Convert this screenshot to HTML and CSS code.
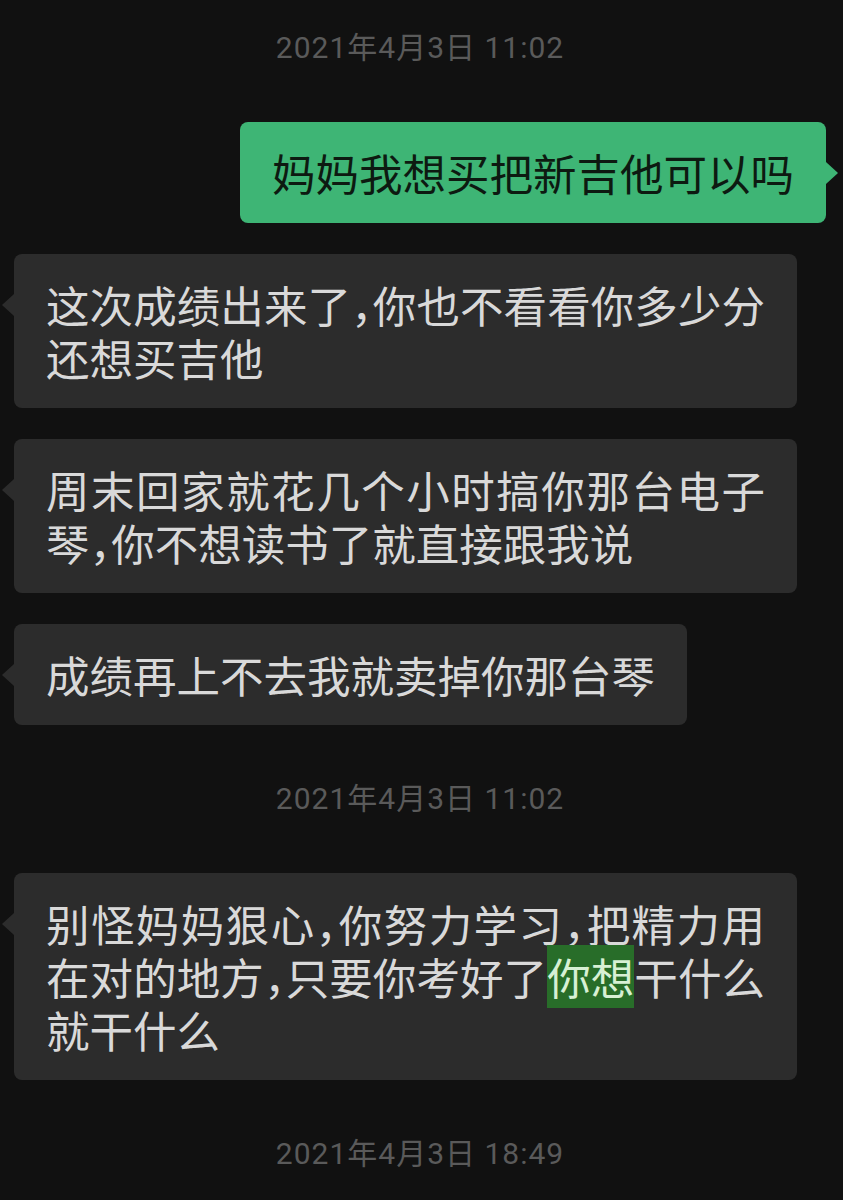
FILE: index.html
```html
<!DOCTYPE html>
<html lang="zh-CN">
<head>
    <meta charset="UTF-8">
    <meta name="viewport" content="width=device-width, initial-scale=1.0">
    <title>聊天记录</title>
    <link rel="stylesheet" href="styles.css">
</head>
<body>
    <div class="chat">
        <div class="time">2021年4月3日 11:02</div>
        <div class="msg msg-out">
            <div class="bubble">妈妈我想买把新吉他可以吗</div>
        </div>
        <div class="msg msg-in">
            <div class="bubble">这次成绩出来了，你也不看看你多少分还想买吉他</div>
        </div>
        <div class="msg msg-in">
            <div class="bubble">周末回家就花几个小时搞你那台电子琴，你不想读书了就直接跟我说</div>
        </div>
        <div class="msg msg-in">
            <div class="bubble">成绩再上不去我就卖掉你那台琴</div>
        </div>
        <div class="time">2021年4月3日 11:02</div>
        <div class="msg msg-in">
            <div class="bubble">别怪妈妈狠心，你努力学习，把精力用在对的地方，只要你考好了<span class="mark">你想</span>干什么就干什么</div>
        </div>
        <div class="time">2021年4月3日 18:49</div>
    </div>
</body>
</html>
```

FILE: styles.css
```css
body {
    margin: 0;
    background-color: #111111;
    font-family: "Noto Sans CJK SC", sans-serif;
}
.chat {
    display: flex;
    flex-direction: column;
    gap: 31px;
    padding: 5px 17px 40px 14px;
}
.time {
    margin: 23px 0;
    text-align: center;
    font-family: Roboto, "Noto Sans CJK SC", sans-serif;
    font-size: 30px;
    line-height: 40px;
    letter-spacing: 1px;
    color: #5a5a5a;
}
.msg {
    display: flex;
}
.msg-out {
    justify-content: flex-end;
}
.bubble {
    position: relative;
    max-width: 783px;
    box-sizing: border-box;
    padding: 24px 32px;
    border-radius: 8px;
    font-size: 43.5px;
    line-height: 53px;
    font-feature-settings: "halt";
    text-align: justify;
    background-color: #2c2c2c;
    color: #d9d9d9;
}
.bubble::before {
    content: "";
    position: absolute;
    top: 40px;
    width: 0;
    height: 0;
    border-top: 11px solid transparent;
    border-bottom: 11px solid transparent;
}
.msg-in .bubble::before {
    left: -12px;
    border-right: 12px solid #2c2c2c;
}
.msg-out .bubble {
    background-color: #3eb575;
    color: #0d1a11;
}
.msg-out .bubble::before {
    right: -12px;
    border-left: 12px solid #3eb575;
}
.mark {
    background-color: #286d29;
    color: #d7f0d4;
}
```
